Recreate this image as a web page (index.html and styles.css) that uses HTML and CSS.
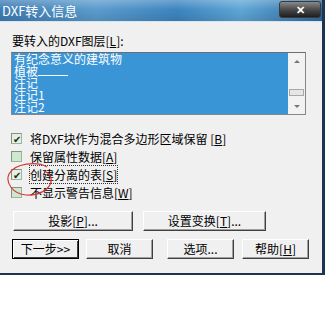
FILE: index.html
```html
<!DOCTYPE html>
<html lang="zh">
<head>
  <meta charset="UTF-8" />
  <title>DXF转入信息</title>
  <link rel="stylesheet" href="styles.css">
</head>
<body>
  <div class="window">
    <div class="titlebar">
      <span class="title">DXF转入信息</span>
      <span class="close">✕</span>
    </div>

    <div class="content">
      <div class="label">要转入的DXF图层[<u>L</u>]:</div>

      <div class="listbox">
        <ul class="items">
          <li>有纪念意义的建筑物</li>
          <li>植被<span class="blank"></span></li>
          <li>注记</li>
          <li>注记1</li>
          <li>注记2</li>
        </ul>
        <div class="scrollbar">
          <span class="arrow up"></span>
          <span class="track"><span class="thumb"></span></span>
          <span class="arrow down"></span>
        </div>
      </div>

      <div class="options">
        <div class="opt"><span class="box checked">✔</span><span>将DXF块作为混合多边形区域保留 [<u>B</u>]</span></div>
        <div class="opt"><span class="box"></span><span>保留属性数据[<u>A</u>]</span></div>
        <div class="opt"><span class="box checked">✔</span><span class="focus">创建分离的表[<u>S</u>]</span></div>
        <div class="opt"><span class="box"></span><span>不显示警告信息[<u>W</u>]</span></div>

        <!-- hand drawn mark -->
        <svg class="mark" width="50" height="36" viewBox="0 0 50 36">
          <path d="M42 5 C32 -1 10 1 4 12 C0 21 8 32 21 33 C33 34 44 28 46 20 C47 15 44 11 39 9" fill="none" stroke="#d23a3a" stroke-width="1.2"/>
        </svg>
      </div>

      <div class="btn-row first">
        <button class="btn wide">投影[<u>P</u>]...</button>
        <button class="btn wide2">设置变换[<u>T</u>]...</button>
      </div>
      <div class="btn-row second">
        <button class="btn default">下一步&gt;&gt;</button>
        <button class="btn cancel">取消</button>
        <button class="btn opts">选项...</button>
        <button class="btn help">帮助[<u>H</u>]</button>
      </div>
    </div>
  </div>
</body>
</html>
```

FILE: styles.css
```css
body {
  margin: 0;
  background: #ffffff;
  font-family: "Noto Sans CJK SC", "Noto Sans", sans-serif;
  font-size: 12px;
  color: #000;
}

.window {
  width: 325px;
  height: 275px;
  box-sizing: border-box;
  background: #f0f0f0;
  border-right: 3px solid #1b3552;
  border-bottom: 2px solid #1b3552;
  display: flex;
  flex-direction: column;
}

.titlebar {
  height: 21px;
  display: flex;
  align-items: flex-start;
  justify-content: space-between;
  padding-left: 2px;
  background:
    linear-gradient(to bottom, rgba(255,255,255,0.25), rgba(255,255,255,0) 45%, rgba(0,0,0,0.1)),
    linear-gradient(to right, #3f7db5, #5b9ccd 30%, #3d85c0 55%, #5fa7d6 75%, #2f6aa3);
  border-bottom: 1px solid #d8e4ee;
}

.title {
  color: #fff;
  font-size: 13px;
  line-height: 21px;
}

.close {
  width: 40px;
  height: 15px;
  margin-top: 1px;
  margin-right: 1px;
  border: 1px solid #3a3a3a;
  border-radius: 3px;
  background: linear-gradient(to bottom, #8a8a8a, #4a4a4a 50%, #1e1e1e);
  color: #fff;
  font-size: 11px;
  font-weight: bold;
  line-height: 15px;
  text-align: center;
}

.content {
  padding: 13px 0 0 11px;
}

.label {
  line-height: 12px;
  padding-left: 1px;
}

u {
  text-decoration: underline;
}

.listbox {
  margin-top: 5px;
  width: 295px;
  height: 63px;
  box-sizing: border-box;
  border: 1px solid #828790;
  border-top-color: #6d6d6d;
  display: flex;
  background: #fff;
}

.items {
  list-style: none;
  margin: 0;
  padding: 0;
  flex: 1;
  background: #3a95d6;
  color: #fff;
}

.items li {
  font-size: 12px;
  line-height: 12px;
  height: 12px;
  padding-left: 2px;
}

.blank {
  display: inline-block;
  width: 30px;
  height: 8px;
  border-bottom: 1px solid #fff;
}

.scrollbar {
  width: 17px;
  display: flex;
  flex-direction: column;
  background: #f2f2f2;
}

.arrow {
  height: 16px;
  display: flex;
  align-items: center;
  justify-content: center;
}

.arrow.up::before {
  content: "";
  border-left: 3px solid transparent;
  border-right: 3px solid transparent;
  border-bottom: 3px solid #777;
}

.arrow.down::before {
  content: "";
  border-left: 3px solid transparent;
  border-right: 3px solid transparent;
  border-top: 3px solid #777;
}

.track {
  flex: 1;
  display: flex;
  flex-direction: column;
  justify-content: flex-end;
  padding-bottom: 2px;
}

.thumb {
  height: 5px;
  margin: 0 1px;
  border: 1px solid #a8a8a8;
  background: #e6e6e6;
}

.options {
  position: relative;
  margin-top: 14px;
}

.opt {
  height: 18px;
  display: flex;
  align-items: center;
  gap: 8px;
}

.box {
  width: 11px;
  height: 11px;
  box-sizing: border-box;
  border: 1px solid #9cb59c;
  border-top-color: #7f957f;
  border-left-color: #7f957f;
  background: #cfe6cf;
  font-size: 10px;
  line-height: 9px;
  color: #1a2a1a;
  text-align: center;
}

.box.checked {
  background: #e4f0e4;
}

.focus {
  outline: 1px dotted #333;
  outline-offset: 0;
}

.mark {
  position: absolute;
  left: -6px;
  top: 33px;
}

.btn-row {
  display: flex;
}

.btn-row.first {
  margin-top: 10px;
  padding-left: 2px;
}

.btn-row.second {
  margin-top: 8px;
  padding-left: 1px;
}

.btn {
  height: 20px;
  padding: 0;
  box-sizing: border-box;
  font-family: "Noto Sans CJK SC", "Noto Sans", sans-serif;
  font-size: 12px;
  line-height: 16px;
  background: #f0f0f0;
  color: #000;
  border: 1px solid;
  border-color: #fff #404040 #404040 #fff;
  box-shadow: inset -1px -1px 0 #a0a0a0;
}

.btn.wide { width: 120px; }
.btn.wide2 { width: 123px; margin-left: 10px; }

.btn.default {
  width: 67px;
  border: 1px solid #000;
  box-shadow: inset 1px 1px 0 #fff, inset -1px -1px 0 #404040;
}

.btn.cancel { width: 67px; margin-left: 7px; }
.btn.opts { width: 67px; margin-left: 14px; }
.btn.help { width: 67px; margin-left: 8px; }
```
